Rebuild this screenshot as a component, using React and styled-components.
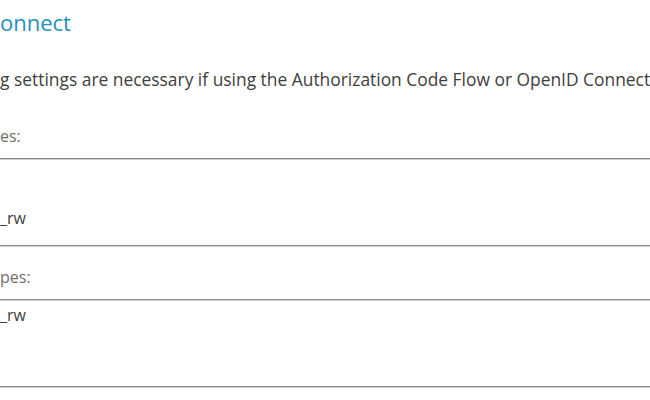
import React from "react";
import styled, { createGlobalStyle } from "styled-components";

const GlobalStyle = createGlobalStyle`
  html, body {
    margin: 0;
    padding: 0;
    background: #ffffff;
  }
  body {
    font-family: "Open Sans", "Liberation Sans", sans-serif;
    overflow: hidden;
  }
`;

const fields = [
  { label: "es:", lines: ["", "", "_rw"] },
  { label: "pes:", lines: ["_rw", "", ""] },
];

function Field({ label, lines, first }) {
  return (
    <FieldWrapper $first={first}>
      <Label>{label}</Label>
      <Box>
        {lines.map((line, i) => (
          <BoxLine key={i}>{line}</BoxLine>
        ))}
      </Box>
    </FieldWrapper>
  );
}

function App() {
  return (
    <>
      <GlobalStyle />
      <Page>
        <Heading>onnect</Heading>
        <Intro>
          g settings are necessary if using the Authorization Code Flow or OpenID Connect
        </Intro>
        {fields.map((f, i) => (
          <Field key={i} first={i === 0} label={f.label} lines={f.lines} />
        ))}
      </Page>
    </>
  );
}

const Page = styled.main`
  width: 650px;
  height: 400px;
  overflow: hidden;
  padding-top: 9px;
  box-sizing: border-box;
  display: flex;
  flex-direction: column;
`;

const Heading = styled.h2`
  margin: 0;
  font-size: 22px;
  line-height: 26px;
  font-weight: 400;
  color: #1f8fc2;
  white-space: nowrap;
`;

const Intro = styled.p`
  margin: 32px 0 0;
  font-size: 17.4px;
  line-height: 24px;
  color: #3e3e3c;
  white-space: nowrap;
`;

const FieldWrapper = styled.section`
  display: flex;
  flex-direction: column;
  gap: 11px;
  margin-top: ${(p) => (p.$first ? "34px" : "20px")};
`;

const Label = styled.div`
  font-size: 16px;
  line-height: 22px;
  color: #706e6b;
  white-space: nowrap;
`;

const Box = styled.div`
  width: 100%;
  height: 88px;
  box-sizing: border-box;
  padding: 4px 0 0;
  border-top: 1px solid #8a8a8a;
  border-bottom: 1px solid #8a8a8a;
  box-shadow: 0 1px 0 #d0d0d0, inset 0 1px 0 #d0d0d0;
`;

const BoxLine = styled.div`
  height: 22px;
  font-size: 16px;
  line-height: 22px;
  color: #3e3e3c;
  white-space: pre;
`;

export default App;
